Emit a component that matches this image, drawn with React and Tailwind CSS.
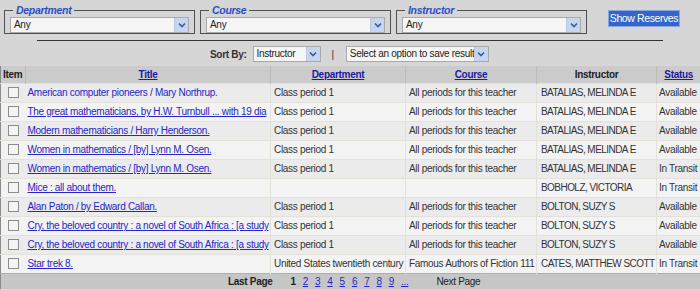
import React from 'react';

const rows = [
  { title: 'American computer pioneers / Mary Northrup.', dept: 'Class period 1', course: 'All periods for this teacher', instructor: 'BATALIAS, MELINDA E', status: 'Available', plain: true },
  { title: 'The great mathematicians, by H.W. Turnbull ... with 19 dia', dept: 'Class period 1', course: 'All periods for this teacher', instructor: 'BATALIAS, MELINDA E', status: 'Available' },
  { title: 'Modern mathematicians / Harry Henderson.', dept: 'Class period 1', course: 'All periods for this teacher', instructor: 'BATALIAS, MELINDA E', status: 'Available' },
  { title: 'Women in mathematics / [by] Lynn M. Osen.', dept: 'Class period 1', course: 'All periods for this teacher', instructor: 'BATALIAS, MELINDA E', status: 'Available' },
  { title: 'Women in mathematics / [by] Lynn M. Osen.', dept: 'Class period 1', course: 'All periods for this teacher', instructor: 'BATALIAS, MELINDA E', status: 'In Transit' },
  { title: 'Mice : all about them.', dept: '', course: '', instructor: 'BOBHOLZ, VICTORIA', status: 'In Transit' },
  { title: 'Alan Paton / by Edward Callan.', dept: 'Class period 1', course: 'All periods for this teacher', instructor: 'BOLTON, SUZY S', status: 'Available' },
  { title: 'Cry, the beloved country : a novel of South Africa : [a study', dept: 'Class period 1', course: 'All periods for this teacher', instructor: 'BOLTON, SUZY S', status: 'Available' },
  { title: 'Cry, the beloved country : a novel of South Africa : [a study', dept: 'Class period 1', course: 'All periods for this teacher', instructor: 'BOLTON, SUZY S', status: 'Available' },
  { title: 'Star trek 8.', dept: 'United States twentieth century', course: 'Famous Authors of Fiction 111', instructor: 'CATES, MATTHEW SCOTT', status: 'In Transit' },
];

function Arrow() {
  return (
    <span className="flex items-center justify-center w-[14px] h-full bg-[#c6d6f0] border-l border-[#b8c8e0]">
      <svg width="8" height="6" viewBox="0 0 8 6">
        <path d="M1 1.5 L4 4.5 L7 1.5" stroke="#3a5a9a" strokeWidth="1.6" fill="none" />
      </svg>
    </span>
  );
}

function FakeSelect({ value, className }) {
  return (
    <div className={`flex items-stretch h-[16px] bg-[#f6f6f6] border border-[#a9a9a9] ${className}`}>
      <span className="flex-1 pl-[3px] leading-[14px] text-[#222] whitespace-nowrap overflow-hidden">{value}</span>
      <Arrow />
    </div>
  );
}

function FilterBox({ label }) {
  return (
    <fieldset className="w-[191px] h-[30px] border border-[#505050] px-[5px] pt-0 pb-0 -mt-[6px]">
      <legend className="ml-[3px] px-[3px] text-[#2a4fc8] italic font-bold leading-[12px] text-[10.5px]">{label}</legend>
      <FakeSelect value="Any" className="w-full mt-[1px]" />
    </fieldset>
  );
}

function App() {
  return (
    <div className="w-[700px] h-[290px] bg-[#d6d6d6] font-['Liberation_Sans',Arial,sans-serif] text-[10px] tracking-[-0.3px] text-[#333] overflow-hidden">
      <div className="flex items-start pl-[4px] pt-[10px] gap-[5px]">
        <FilterBox label="Department" />
        <FilterBox label="Course" />
        <FilterBox label="Instructor" />
        <button className="ml-[16px] w-[72px] h-[17px] bg-[#3366cc] border border-[#8aa6e0] text-white text-[10.5px] tracking-[-0.4px] leading-[15px] whitespace-nowrap font-['Liberation_Sans',Arial,sans-serif]">
          Show Reserves
        </button>
      </div>
      <div className="ml-[37px] w-[626px] h-[1px] bg-[#333] mt-[6px]" />
      <div className="flex items-center h-[16px] mt-[5px]">
        <span className="ml-[210px] font-bold">Sort By:</span>
        <FakeSelect value="Instructor" className="ml-[6px] w-[68px]" />
        <span className="ml-[11px] mr-[12px]">|</span>
        <FakeSelect value="Select an option to save result" className="w-[143px]" />
      </div>
      <table className="mt-[4px] w-[700px] table-fixed border-collapse border-l border-[#8a8a8a]">
        <colgroup>
          <col className="w-[25px]" />
          <col className="w-[245px]" />
          <col className="w-[135px]" />
          <col className="w-[131px]" />
          <col className="w-[120px]" />
          <col className="w-[44px]" />
        </colgroup>
        <thead>
          <tr className="h-[17px] bg-[#cbcbcb]">
            <th className="text-left pl-[2px] font-bold text-[#222] border-r border-[#bcbcbc]">Item</th>
            <th className="font-bold text-[#1a1aa6] underline border-r border-[#bcbcbc]">Title</th>
            <th className="font-bold text-[#1a1aa6] underline border-r border-[#bcbcbc]">Department</th>
            <th className="font-bold text-[#1a1aa6] underline border-r border-[#bcbcbc]">Course</th>
            <th className="font-bold text-[#222] border-r border-[#bcbcbc]">Instructor</th>
            <th className="font-bold text-[#1a1aa6] underline">Status</th>
          </tr>
        </thead>
        <tbody>
          {rows.map((r, i) => (
            <tr key={i} className={`h-[19px] ${i % 2 === 0 ? 'bg-[#ebebeb]' : 'bg-[#f3f3f3]'}`}>
              <td className="pl-[7px] border-t border-[#e4e0da]">
                <span className="block w-[11px] h-[11px] border border-[#8c8c8c] bg-[#f4f4f4]" />
              </td>
              <td className="pl-[2px] whitespace-nowrap overflow-hidden border-t border-r border-[#e4e0da]">
                <span className={`text-[#2626c8] ${r.plain ? '' : 'underline'}`}>{r.title}</span>
              </td>
              <td className="pl-[3px] whitespace-nowrap overflow-hidden border-t border-r border-[#e4e0da]">{r.dept}</td>
              <td className="pl-[3px] whitespace-nowrap overflow-hidden border-t border-r border-[#e4e0da]">{r.course}</td>
              <td className="pl-[4px] tracking-[-0.55px] whitespace-nowrap overflow-hidden border-t border-r border-[#e4e0da]">{r.instructor}</td>
              <td className="pl-[2px] whitespace-nowrap overflow-hidden border-t border-[#e4e0da]">{r.status}</td>
            </tr>
          ))}
          <tr className="h-[16px] bg-[#c6c6c6] border-t border-[#b0b0b0]">
            <td colSpan={6}>
              <div className="flex items-center text-[#222]">
                <span className="ml-[227px] font-bold">Last Page</span>
                <span className="ml-[18px] font-bold">1</span>
                {['2', '3', '4', '5', '6', '7', '8', '9', '...'].map((p) => (
                  <span key={p} className="ml-[7px] text-[#2626c8] underline">{p}</span>
                ))}
                <span className="ml-[28px]">Next Page</span>
              </div>
            </td>
          </tr>
        </tbody>
      </table>
    </div>
  );
}

export default App;
